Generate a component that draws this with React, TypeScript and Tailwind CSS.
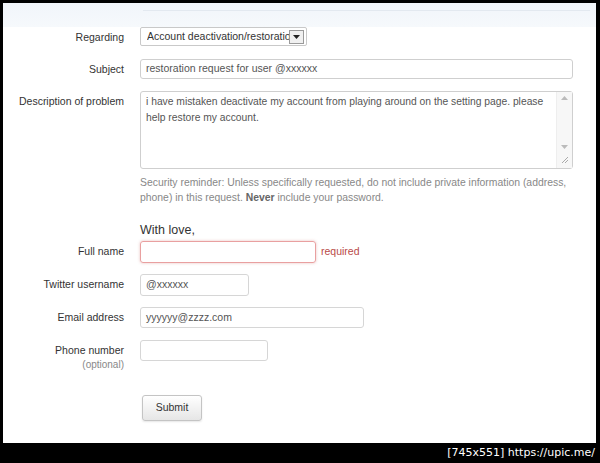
import React from "react";

const font = "font-['Liberation_Sans',Arial,sans-serif]";

function Row({
  label,
  sub,
  children,
  className = "",
}: {
  label: string;
  sub?: string;
  children: React.ReactNode;
  className?: string;
}) {
  return (
    <div className={`flex items-start ${className}`}>
      <div className="w-[121px] shrink-0 text-right text-[10.5px] leading-[20px] text-[#333]">
        {label}
        {sub && <div className="-mt-[2px] text-[10px] leading-[14px] text-[#888]">{sub}</div>}
      </div>
      <div className="ml-[16px] flex items-center">{children}</div>
    </div>
  );
}

export default function App() {
  return (
    <div className={`w-[600px] h-[463px] bg-black flex flex-col ${font}`}>
      <div className="mt-[3px] ml-[3px] mr-[4px] h-[440px] bg-white flex flex-col">
        <div className="h-[24px] bg-gradient-to-b from-[#f1f5fa] to-[#f6f9fc] pt-[7px]">
          <div className="ml-[140px] mr-[6px] h-px bg-[#e3e9f0]" />
        </div>

        <Row label="Regarding" className="mt-0">
          <div className="w-[167px] h-[19px] border border-[#c9c9c9] rounded-[2px] bg-white flex items-center pl-[6px] pr-[2px] text-[10.5px] text-[#333]">
            <span className="flex-1 overflow-hidden whitespace-nowrap">Account deactivation/restoration</span>
            <span className="w-[15px] h-[14px] border border-[#9a9a9a] bg-[#f0f0f0] flex items-center justify-center shrink-0">
              <svg width="7" height="4" viewBox="0 0 7 4"><path d="M0 0h7L3.5 4z" fill="#222" /></svg>
            </span>
          </div>
        </Row>

        <Row label="Subject" className="mt-[12px]">
          <div className="w-[433px] h-[20px] border border-[#cfcfcf] rounded-[3px] flex items-center px-[5px] text-[10.5px] text-[#555]">
            restoration request for user @xxxxxx
          </div>
        </Row>

        <Row label="Description of problem" className="mt-[12px]">
          <div className="w-[433px] h-[78px] border border-[#cfcfcf] rounded-[3px] flex text-[10.3px] text-[#555]">
            <div className="flex-1 pl-[5px] pt-[2px] leading-[16px]">
              i have mistaken deactivate my account from playing around on the setting page. please help restore my account.
            </div>
            <div className="w-[16px] flex flex-col items-center justify-between bg-[#f7f7f7] border-l border-[#eee] py-[4px]">
              <svg width="7" height="4" viewBox="0 0 7 4"><path d="M0 4h7L3.5 0z" fill="#bbb" /></svg>
              <div className="flex flex-col items-center gap-[6px]">
                <svg width="7" height="4" viewBox="0 0 7 4"><path d="M0 0h7L3.5 4z" fill="#bbb" /></svg>
                <svg width="9" height="9" viewBox="0 0 9 9"><path d="M8 2L2 8M8 5L5 8" stroke="#aaa" strokeWidth="1" /></svg>
              </div>
            </div>
          </div>
        </Row>

        <p className="ml-[137px] mt-[6px] w-[440px] text-[10.4px] leading-[15px] text-[#888]">
          Security reminder: Unless specifically requested, do not include private information (address,
          phone) in this request. <b className="font-bold text-[#666]">Never</b> include your password.
        </p>

        <div className="ml-[137px] mt-[15px] text-[12.5px] leading-[20px] text-[#333]">With love,</div>

        <Row label="Full name" className="mt-[1px]">
          <div className="w-[176px] h-[22px] border border-[#e9a0a0] rounded-[3px] shadow-[0_0_3px_rgba(185,74,72,0.35)]" />
          <span className="ml-[5px] text-[10.5px] text-[#b94a48]">required</span>
        </Row>

        <Row label="Twitter username" className="mt-[11px]">
          <div className="w-[109px] h-[22px] border border-[#d6d6d6] rounded-[3px] flex items-center px-[5px] text-[10.5px] text-[#555]">
            @xxxxxx
          </div>
        </Row>

        <Row label="Email address" className="mt-[11px]">
          <div className="w-[224px] h-[21px] border border-[#d6d6d6] rounded-[3px] flex items-center px-[5px] text-[10.5px] text-[#555]">
            yyyyyy@zzzz.com
          </div>
        </Row>

        <Row label="Phone number" sub="(optional)" className="mt-[12px]">
          <div className="w-[128px] h-[21px] border border-[#d6d6d6] rounded-[3px]" />
        </Row>

        <div className="ml-[139px] mt-[22px]">
          <button className="w-[60px] h-[26px] border border-[#c4c4c4] rounded-[3px] bg-gradient-to-b from-white to-[#e6e6e6] text-[10.5px] text-[#333] shadow-[0_1px_2px_rgba(0,0,0,0.1)]">
            Submit
          </button>
        </div>
      </div>
      <div className="h-[20px] flex items-center justify-end pr-[5px] text-[11px] text-white font-['DejaVu_Sans',sans-serif]">
        [745x551] https://upic.me/
      </div>
    </div>
  );
}
